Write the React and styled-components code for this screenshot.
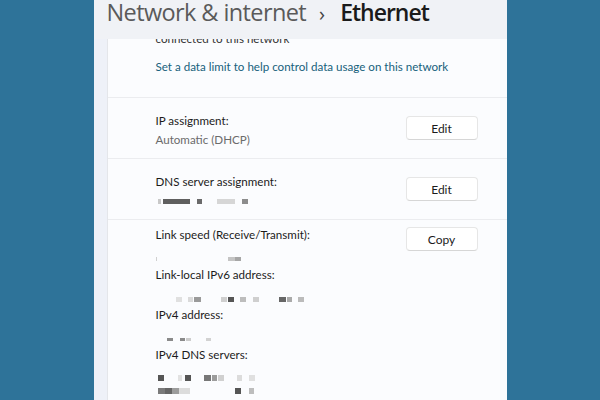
import styled, { createGlobalStyle } from "styled-components";

const GlobalStyle = createGlobalStyle`
  html, body {
    margin: 0;
    padding: 0;
    background: #2e7399;
    font-family: "Lato", "Open Sans", sans-serif;
  }
`;

const blocks = {
  dns: [
    [2, 3, "#c8c8c8"], [2, 27, "#5f5f5f"], [7, 5, "#6a6a6a"], [15, 18, "#d6d6d6"], [7, 6, "#8c8c8c"],
  ],
  speed: [[0, 1, "#d0d0d0"], [71, 7, "#c4c4c4"], [0, 6, "#a6a6a6"]],
  ipv6: [
    [20, 6, "#e0e0e0"], [6, 5, "#dadada"], [1, 7, "#9a9a9a"], [20, 6, "#cfcfcf"], [1, 6, "#555"],
    [6, 6, "#bdbdbd"], [7, 6, "#cfcfcf"], [20, 7, "#666"], [1, 5, "#aaa"], [6, 6, "#bbb"],
  ],
  ipv4: [[11, 6, "#8a8a8a"], [7, 5, "#8a8a8a"], [1, 5, "#cdcdcd"], [15, 5, "#d2d2d2"]],
  dns1: [
    [2, 6, "#555"], [14, 4, "#e2e2e2"], [3, 6, "#555"], [13, 7, "#777"], [1, 5, "#9c9c9c"],
    [1, 6, "#d0d0d0"], [13, 5, "#dcdcdc"], [7, 6, "#e0e0e0"],
  ],
  dns2: [[2, 7, "#7a7a7a"], [0, 7, "#666"], [0, 7, "#9c9c9c"], [0, 11, "#dcdcdc"], [45, 6, "#555"], [8, 5, "#bdbdbd"]],
};

const Redacted = ({ data, h = 5 }) => (
  <PixelRow>
    {data.map(([gap, w, c], i) => (
      <Pixel key={i} style={{ marginLeft: gap, width: w, height: h, background: c }} />
    ))}
  </PixelRow>
);

const App = () => {
  return (
    <>
      <GlobalStyle />
      <Window>
        <Header>
          <Crumb>Network &amp; internet</Crumb>
          <Chevron>›</Chevron>
          <Current>Ethernet</Current>
        </Header>
        <Viewport>
          <Intro>
            <Note>connected to this network</Note>
            <Link>Set a data limit to help control data usage on this network</Link>
          </Intro>
          <Section>
            <Row>
              <Info pad>
                <Label>IP assignment:</Label>
                <Value>Automatic (DHCP)</Value>
              </Info>
              <Button>Edit</Button>
            </Row>
          </Section>
          <Section>
            <Row>
              <Info pad>
                <Label>DNS server assignment:</Label>
                <ValueBox>
                  <Redacted data={blocks.dns} />
                </ValueBox>
              </Info>
              <Button>Edit</Button>
            </Row>
          </Section>
          <Props>
            <Row top>
              <Info>
                <Label>Link speed (Receive/Transmit):</Label>
                <PropValue>
                  <Redacted data={blocks.speed} h={4} />
                </PropValue>
              </Info>
              <Button>Copy</Button>
            </Row>
            <Label>Link-local IPv6 address:</Label>
            <PropValue>
              <Redacted data={blocks.ipv6} />
            </PropValue>
            <Label>IPv4 address:</Label>
            <PropValue>
              <Redacted data={blocks.ipv4} h={3} />
            </PropValue>
            <Label>IPv4 DNS servers:</Label>
            <DnsValues>
              <Redacted data={blocks.dns1} h={6} />
              <Redacted data={blocks.dns2} h={6} />
            </DnsValues>
          </Props>
        </Viewport>
      </Window>
    </>
  );
};

//Styled Components

const Window = styled.div`
  width: 413px;
  height: 400px;
  margin: 0 auto;
  background: #eef1f8;
  display: flex;
  flex-direction: column;
  overflow: hidden;
`;

const Header = styled.div`
  height: 39px;
  flex-shrink: 0;
  display: flex;
  align-items: baseline;
  padding: 0 0 0 13px;
  box-sizing: border-box;
  white-space: nowrap;
  background: #f0f2f6;
  font-family: "Open Sans", sans-serif;
  line-height: 25px;
`;

const Crumb = styled.span`
  font-size: 23.5px;
  font-weight: 500;
  color: #5a5a5a;
  letter-spacing: -0.6px;
`;

const Chevron = styled.span`
  font-size: 20px;
  color: #444;
  margin: 0 15px 0 13px;
`;

const Current = styled(Crumb)`
  font-size: 23px;
  font-weight: 600;
  color: #1b1b1b;
  letter-spacing: -1px;
`;

const Viewport = styled.div`
  flex: 1;
  margin-left: 13px;
  overflow: hidden;
  border-left: 1px solid #e4e6ea;
  background: #fbfcfe;
  display: flex;
  flex-direction: column;
`;

const Intro = styled.div`
  height: 59px;
  flex-shrink: 0;
  box-sizing: border-box;
  border-bottom: 1px solid #ebecef;
  padding: 0 0 22px 48px;
  display: flex;
  flex-direction: column;
  justify-content: flex-end;
  white-space: nowrap;
`;

const Section = styled.div`
  height: 61px;
  flex-shrink: 0;
  box-sizing: border-box;
  border-bottom: 1px solid #ebecef;
  padding: 0 29px 0 48px;
  display: flex;
  flex-direction: column;
  justify-content: center;
`;

const Note = styled.div`
  font-size: 11.6px;
  line-height: 16px;
  color: #333;
  margin-bottom: 12px;
`;

const Link = styled.div`
  font-size: 11.6px;
  line-height: 16px;
  color: #17617c;
`;

const Row = styled.div`
  display: flex;
  justify-content: space-between;
  align-items: ${(p) => (p.top ? "flex-start" : "center")};
`;

const Info = styled.div`
  display: flex;
  flex-direction: column;
  padding-top: ${(p) => (p.pad ? "5px" : "0")};
`;

const Label = styled.div`
  font-size: 11.6px;
  color: #1b1b1b;
  line-height: 16px;
  white-space: nowrap;
`;

const Value = styled.div`
  font-size: 11.6px;
  color: #6b6b6b;
  line-height: 16px;
  margin-top: 3px;
`;

const ValueBox = styled.div`
  height: 16px;
  margin-top: 3px;
  display: flex;
  align-items: center;
`;

const Button = styled.div`
  width: 70px;
  height: 22px;
  border: 1px solid #e6e6e6;
  border-bottom-color: #d6d6d6;
  border-radius: 4px;
  background: #fff;
  font-size: 12px;
  color: #1b1b1b;
  display: flex;
  align-items: center;
  justify-content: center;
`;

const Props = styled.div`
  padding: 7px 29px 0 48px;
  display: flex;
  flex-direction: column;
`;

const PropValue = styled.div`
  height: 8px;
  margin: 12px 0 4px;
  display: flex;
  align-items: center;
`;

const DnsValues = styled.div`
  display: flex;
  flex-direction: column;
  gap: 7px;
  padding-top: 12px;
`;

const PixelRow = styled.div`
  display: flex;
  align-items: center;
`;

const Pixel = styled.span`
  display: block;
  flex-shrink: 0;
`;

export default App;
